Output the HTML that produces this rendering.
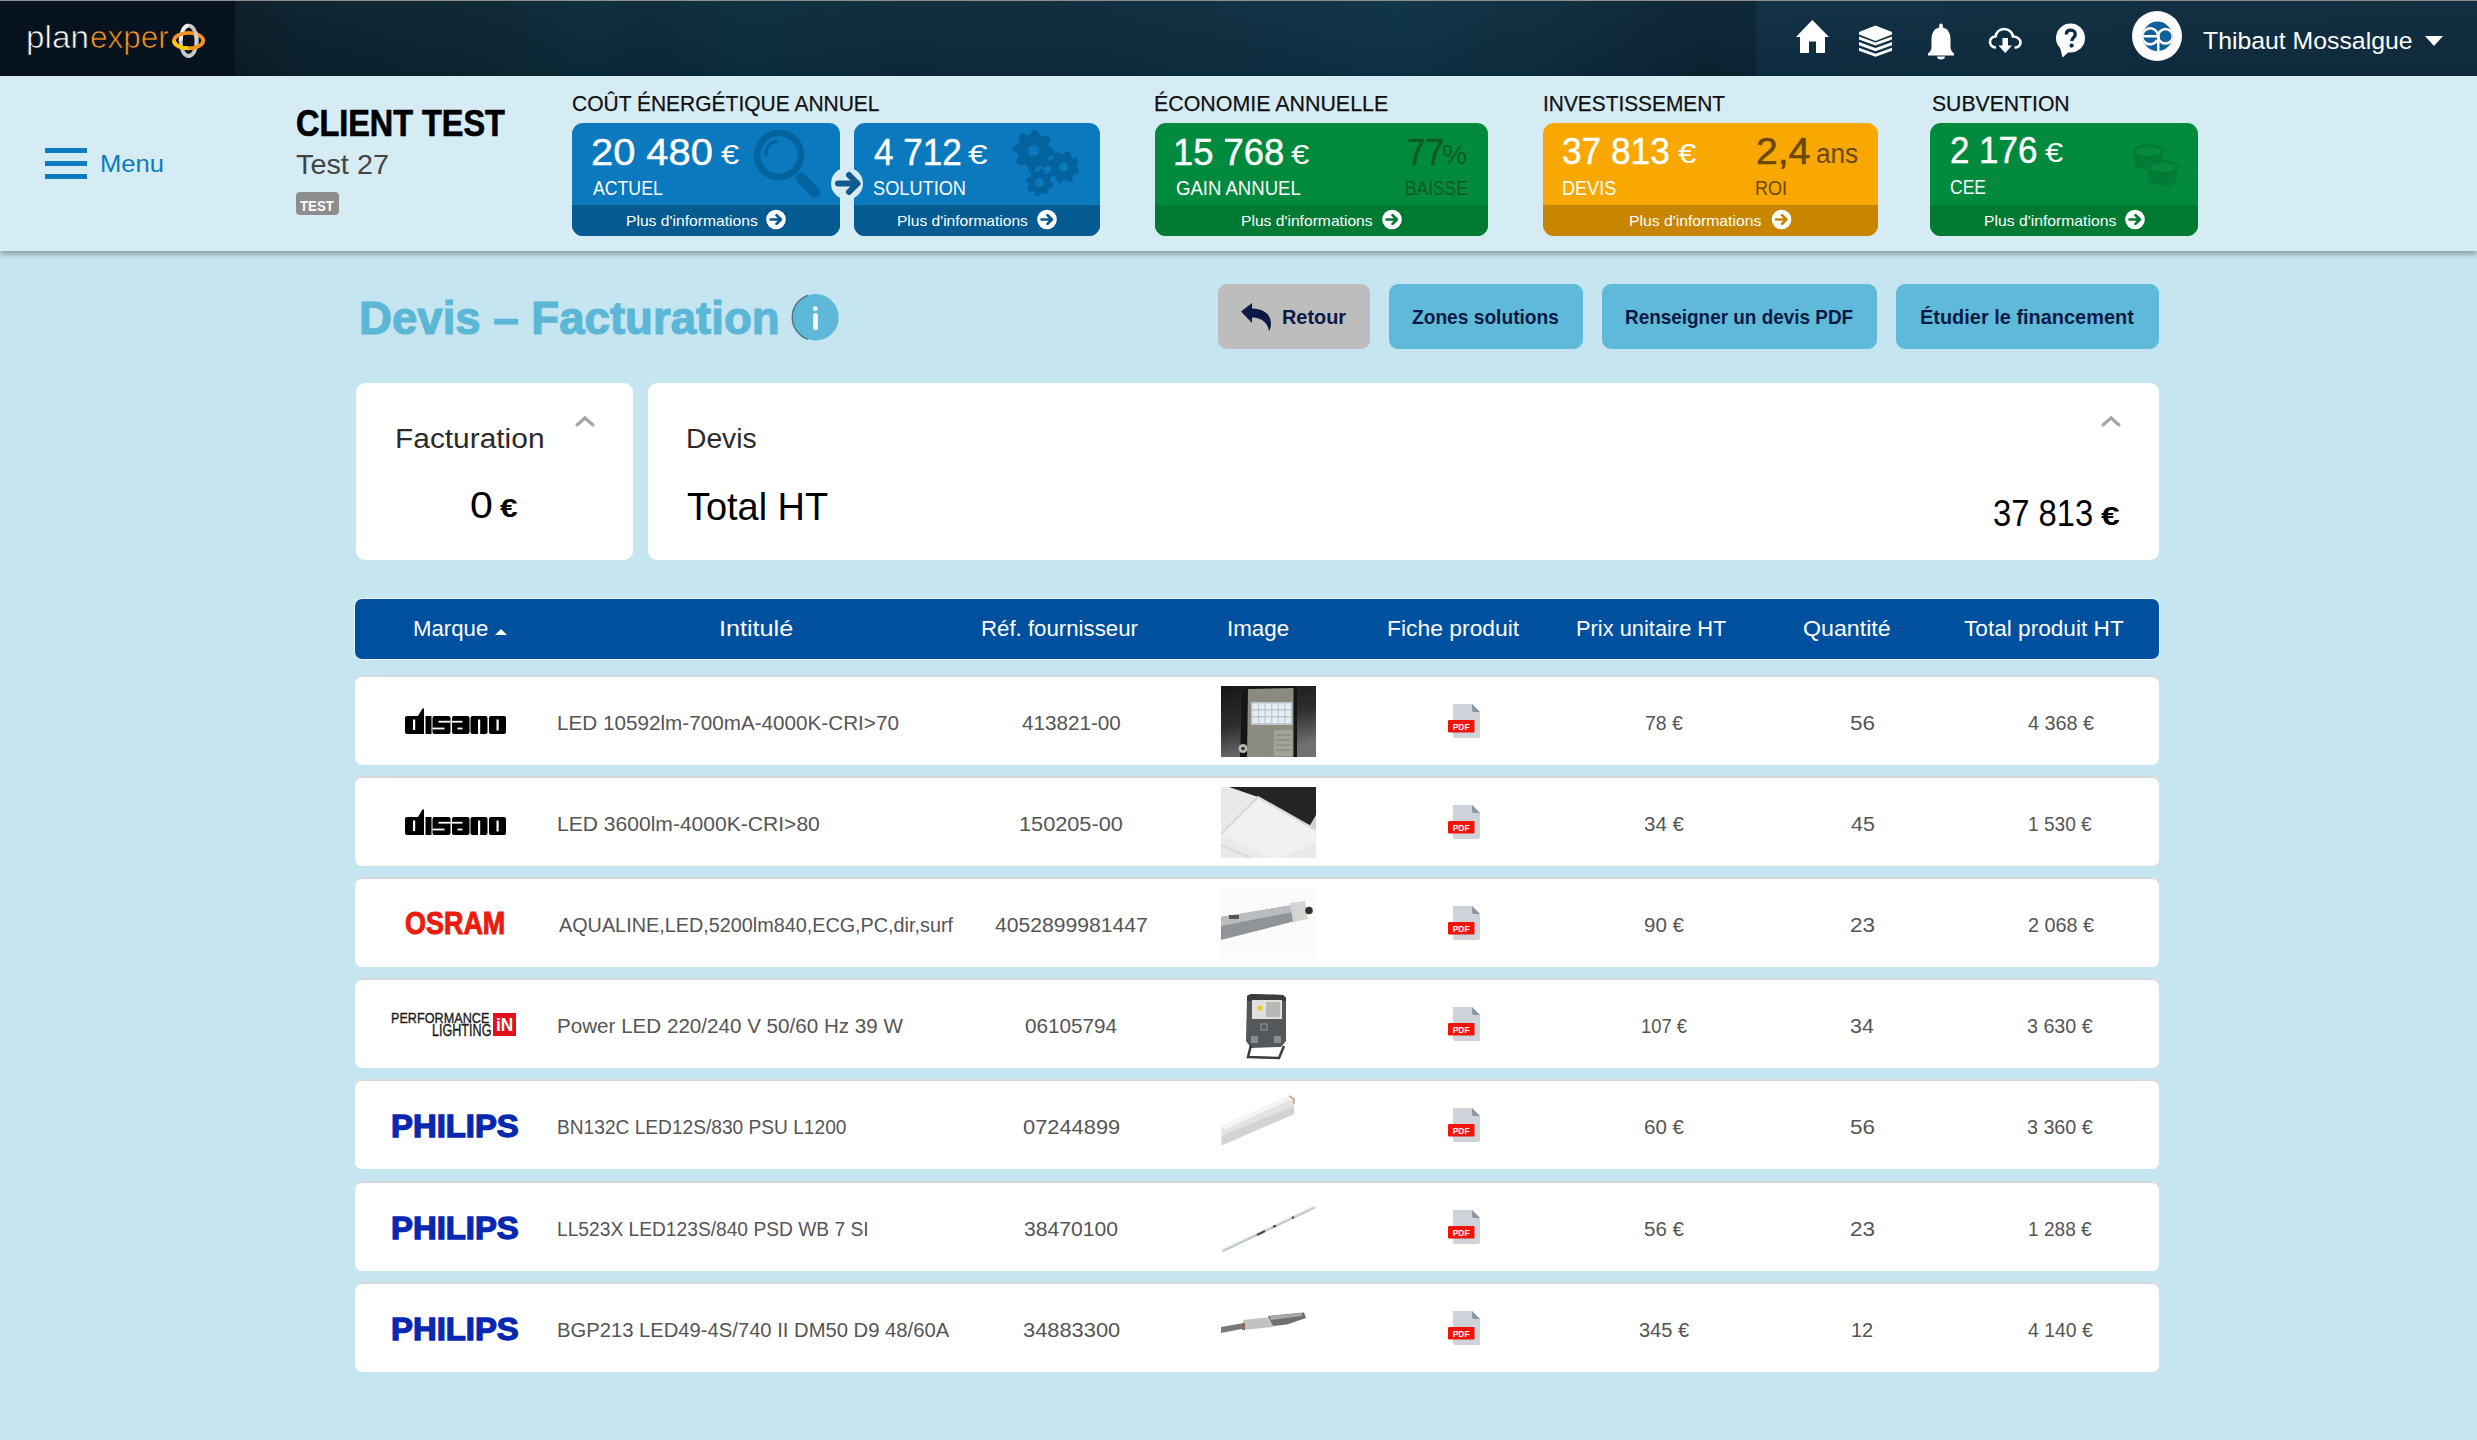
<!DOCTYPE html><html><head><meta charset="utf-8"><style>
*{margin:0;padding:0;box-sizing:border-box}
html,body{width:2477px;height:1440px;overflow:hidden;background:#c5e5f0;font-family:"Liberation Sans",sans-serif}
.t{position:absolute;white-space:nowrap;display:block}
.nav{position:absolute;left:0;top:0;width:2477px;height:76px;border-top:1px solid #8e8e8e;
 background:linear-gradient(180deg,rgba(255,255,255,0.02),rgba(0,0,0,0.04)),linear-gradient(90deg,#0a1c28 9.5%,#0b212e 12.1%,#0c2634 20.2%,#0b2b39 23.8%,#0c2837 26.2%,#0a2e3d 30.1%,#0d2a3b 36.3%,#0d2b3d 44.4%,#0d3246 56.5%,#0d2c3d 62.6%,#0b2333 68.6%,#0b2434 70.8%,#0f2e42 71%,#0e2d40 80.7%,#0e2b3d 100%)}
.navlogo{position:absolute;left:0;top:1px;width:235px;height:75px;background:#06121d}
.band{position:absolute;left:0;top:76px;width:2477px;height:175px;background:#d6ecf5;box-shadow:0 3px 6px rgba(0,0,0,0.32)}
.row{position:absolute;left:355px;width:1804px;height:90px;background:#fff;border-radius:7px;box-shadow:inset 0 2px 0 #d5d9dc}
</style></head><body>
<div class="nav"></div>
<div class="navlogo"></div>
<div class="band"></div>
<div style="position:absolute;left:45px;top:148px;width:42px;height:5px;background:#0b7cc0"></div>
<div style="position:absolute;left:45px;top:161px;width:42px;height:5px;background:#0b7cc0"></div>
<div style="position:absolute;left:45px;top:174px;width:42px;height:5px;background:#0b7cc0"></div>
<div style="position:absolute;left:296px;top:192px;width:43px;height:23px;background:#8d8d8d;border-radius:4px"></div>
<div style="position:absolute;left:572px;top:123px;width:268px;height:113px;background:#0a79be;border-radius:11px;overflow:hidden"><div style="position:absolute;left:0;top:82px;width:100%;height:31px;background:#035b91"></div></div>
<div style="position:absolute;left:854px;top:123px;width:246px;height:113px;background:#0a79be;border-radius:11px;overflow:hidden"><div style="position:absolute;left:0;top:82px;width:100%;height:31px;background:#035b91"></div></div>
<div style="position:absolute;left:1155px;top:123px;width:333px;height:113px;background:#008a3d;border-radius:11px;overflow:hidden"><div style="position:absolute;left:0;top:82px;width:100%;height:31px;background:#007a33"></div></div>
<div style="position:absolute;left:1543px;top:123px;width:335px;height:113px;background:#f8a800;border-radius:11px;overflow:hidden"><div style="position:absolute;left:0;top:82px;width:100%;height:31px;background:#c88600"></div></div>
<div style="position:absolute;left:1930px;top:123px;width:268px;height:113px;background:#008a3d;border-radius:11px;overflow:hidden"><div style="position:absolute;left:0;top:82px;width:100%;height:31px;background:#007a33"></div></div>
<svg style="position:absolute;z-index:3;left:170px;top:22px;overflow:visible" width="40" height="40" viewBox="0 0 40 40"><ellipse cx="18.6" cy="18.8" rx="8" ry="15.2" fill="none" stroke="#c8c8c8" stroke-width="3.8"/><path d="M18.6,3.6 A8,15.2 0 0 0 10.6,18.8" fill="none" stroke="#f2f2f2" stroke-width="3.8"/><ellipse cx="18.6" cy="18.6" rx="14.6" ry="7.8" fill="none" stroke="#f7931e" stroke-width="3.8"/><path d="M4,18.6 A14.6,7.8 0 0 0 18.6,26.4" fill="none" stroke="#ffcc00" stroke-width="3.8"/><path d="M25.5,10 A8,15.2 0 0 1 26.6,22" fill="none" stroke="#d0d0d0" stroke-width="3.8"/></svg>
<svg style="position:absolute;z-index:3;left:1790px;top:15px;overflow:visible" width="45" height="45" viewBox="0 0 45 45"><path d="M22.3,5 L39,22 L35,22 L35,38 L26,38 L26,26.6 L19,26.6 L19,38 L10,38 L10,22 L6,22 Z" fill="#fff"/></svg>
<svg style="position:absolute;z-index:3;left:1859px;top:25px;overflow:visible" width="33" height="32" viewBox="0 0 33 32"><path d="M0,7 L16.5,0.5 L33,7 L33,9.5 L16.5,16 L0,9.5Z" fill="#fff"/><path d="M0,11.5 L16.5,17.5 L33,11.5 L33,14.6 L16.5,20.6 L0,14.6Z" fill="#fff"/><path d="M0,17.1 L16.5,23.1 L33,17.1 L33,20.2 L16.5,26.200000000000003 L0,20.2Z" fill="#fff"/><path d="M0,22.7 L16.5,28.7 L33,22.7 L33,25.799999999999997 L16.5,31.8 L0,25.799999999999997Z" fill="#fff"/></svg>
<svg style="position:absolute;z-index:3;left:1926px;top:22px;overflow:visible" width="30" height="37" viewBox="0 0 30 37"><rect x="13.2" y="1.5" width="3.6" height="6" rx="1.8" fill="#fff"/><path d="M15,5.5 C8,5.5 5.5,11 5.5,18 L5.5,25 C5.5,28 4,30 2,31.5 L2,33.5 L28,33.5 L28,31.5 C26,30 24.5,28 24.5,25 L24.5,18 C24.5,11 22,5.5 15,5.5Z" fill="#fff"/><path d="M11,34.5 A4,3 0 0 0 19,34.5Z" fill="#fff"/></svg>
<svg style="position:absolute;z-index:3;left:1987px;top:26px;overflow:visible" width="37" height="30" viewBox="0 0 37 30"><path d="M9,21.5 C4.5,21.5 3,18.5 3,16 C3,12.5 5.5,10.5 8.5,10.5 C9.5,5.5 13.5,3 17.5,3 C22,3 25.5,6.5 26,10.5 C30,10.5 33.5,13 33.5,16.5 C33.5,19.5 31,21.5 27.5,21.5" fill="none" stroke="#fff" stroke-width="2.6"/><path d="M15.5,12 L21,12 L21,19.5 L25,19.5 L18.2,27 L11.5,19.5 L15.5,19.5Z" fill="#fff"/></svg>
<svg style="position:absolute;z-index:3;left:2054px;top:22px;overflow:visible" width="34" height="38" viewBox="0 0 34 38"><circle cx="16.5" cy="16" r="14.5" fill="#fff"/><path d="M6,25 L8.5,35.5 L17,28Z" fill="#fff"/><path d="M12.3,12.5 C12.3,9.7 14.2,8.2 16.7,8.2 C19.3,8.2 21.2,9.8 21.2,12.2 C21.2,15.6 17.8,15.6 17.8,19" fill="none" stroke="#0d2b40" stroke-width="3.3"/><circle cx="17.6" cy="23.6" r="2.1" fill="#0d2b40"/></svg>
<svg style="position:absolute;z-index:3;left:2132px;top:11px;overflow:visible" width="50" height="50" viewBox="0 0 50 50"><defs><clipPath id="avc"><circle cx="25.5" cy="25.4" r="14.8"/></clipPath></defs><circle cx="25" cy="25" r="25" fill="#fff"/><circle cx="25.5" cy="25.4" r="14.8" fill="#11609a"/><g clip-path="url(#avc)" fill="none" stroke="#fff" stroke-width="2.5"><path d="M9,25.2 H26.4"/><path d="M26.2,25.2 A8,8 0 1 0 25.2,29.2"/><path d="M26.3,25 V42"/><circle cx="33.5" cy="25.2" r="7.3"/></g></svg>
<div style="position:absolute;left:2425px;top:36px;width:0;height:0;border-left:9.5px solid transparent;border-right:9.5px solid transparent;border-top:10px solid #fff"></div>
<svg style="position:absolute;z-index:3;left:750px;top:127px;overflow:visible" width="75" height="75" viewBox="0 0 75 75"><circle cx="29" cy="28" r="22" fill="none" stroke="#03639f" stroke-width="6.5"/><path d="M16,27 C16,20 20,15.5 26,14.5" fill="none" stroke="#03639f" stroke-width="3.5" stroke-linecap="round"/><path d="M51,51 L65,65.5" stroke="#03639f" stroke-width="10.5" stroke-linecap="round"/></svg>
<svg style="position:absolute;z-index:3;left:0px;top:0px;overflow:visible" width="2477" height="300" viewBox="0 0 2477 300"><path d="M1053.5,150.5 L1053.1,154.4 L1047.8,156.4 L1046.4,159.1 L1047.6,164.6 L1044.6,167.1 L1039.4,164.8 L1036.5,165.7 L1033.5,170.5 L1029.6,170.1 L1027.6,164.8 L1024.9,163.4 L1019.4,164.6 L1016.9,161.6 L1019.2,156.4 L1018.3,153.5 L1013.5,150.5 L1013.9,146.6 L1019.2,144.6 L1020.6,141.9 L1019.4,136.4 L1022.4,133.9 L1027.6,136.2 L1030.5,135.3 L1033.5,130.5 L1037.4,130.9 L1039.4,136.2 L1042.1,137.6 L1047.6,136.4 L1050.1,139.4 L1047.8,144.6 L1048.7,147.5Z" fill="#03639f" stroke="#03639f" stroke-width="1.5" stroke-linejoin="round"/><circle cx="1033.5" cy="150.5" r="5.5" fill="#0a79be"/><path d="M1078.7,170.1 L1077.8,173.0 L1073.5,173.7 L1072.0,175.5 L1072.1,179.9 L1069.4,181.3 L1065.8,178.8 L1063.5,179.0 L1060.4,182.2 L1057.5,181.3 L1056.8,177.0 L1055.0,175.5 L1050.6,175.6 L1049.2,172.9 L1051.7,169.3 L1051.5,167.0 L1048.3,163.9 L1049.2,161.0 L1053.5,160.3 L1055.0,158.5 L1054.9,154.1 L1057.6,152.7 L1061.2,155.2 L1063.5,155.0 L1066.6,151.8 L1069.5,152.7 L1070.2,157.0 L1072.0,158.5 L1076.4,158.4 L1077.8,161.1 L1075.3,164.7 L1075.5,167.0Z" fill="#03639f" stroke="#03639f" stroke-width="1.5" stroke-linejoin="round"/><circle cx="1063.5" cy="167" r="4.5" fill="#0a79be"/><path d="M1052.4,183.8 L1051.9,186.3 L1048.3,187.2 L1047.2,188.9 L1047.7,192.6 L1045.6,194.0 L1042.4,192.1 L1040.5,192.5 L1038.2,195.4 L1035.7,194.9 L1034.8,191.3 L1033.1,190.2 L1029.4,190.7 L1028.0,188.6 L1029.9,185.4 L1029.5,183.5 L1026.6,181.2 L1027.1,178.7 L1030.7,177.8 L1031.8,176.1 L1031.3,172.4 L1033.4,171.0 L1036.6,172.9 L1038.5,172.5 L1040.8,169.6 L1043.3,170.1 L1044.2,173.7 L1045.9,174.8 L1049.6,174.3 L1051.0,176.4 L1049.1,179.6 L1049.5,181.5Z" fill="#03639f" stroke="#03639f" stroke-width="1.5" stroke-linejoin="round"/><circle cx="1039.5" cy="182.5" r="4.5" fill="#0a79be"/></svg>
<svg style="position:absolute;z-index:3;left:828px;top:166px;overflow:visible" width="38" height="36" viewBox="0 0 38 36"><circle cx="19" cy="17.5" r="16" fill="#d6ecf5"/><path d="M10,17.5 H28 M21,9 L29.5,17.5 L21,26" fill="none" stroke="#0f5a8e" stroke-width="6" stroke-linecap="round" stroke-linejoin="round"/></svg>
<svg style="position:absolute;z-index:3;left:0px;top:0px;overflow:visible" width="2477" height="300" viewBox="0 0 2477 300"><path d="M2134.5,151.5 V163.5 A14,6 0 0 0 2162.5,163.5 V151.5 A14,6 0 0 0 2134.5,151.5Z" fill="#037a37" stroke="#04823a" stroke-width="0.8"/><ellipse cx="2148.5" cy="151.5" rx="14" ry="6" fill="#058a3e" stroke="#037a37" stroke-width="2.5"/><path d="M2148.5,167.5 V179.5 A14,6 0 0 0 2176.5,179.5 V167.5 A14,6 0 0 0 2148.5,167.5Z" fill="#037a37" stroke="#04823a" stroke-width="0.8"/><ellipse cx="2162.5" cy="167.5" rx="14" ry="6" fill="#058a3e" stroke="#037a37" stroke-width="2.5"/></svg>
<svg style="position:absolute;z-index:3;left:0px;top:0px;overflow:visible" width="2477" height="300" viewBox="0 0 2477 300"><circle cx="776" cy="219.5" r="9.8" fill="#fff"/><path d="M770.6,219.5 H779.9 M776.5,215.1 L780.9,219.5 L776.5,223.9" stroke="#035b91" stroke-width="2.7" fill="none" stroke-linecap="round" stroke-linejoin="round"/></svg>
<svg style="position:absolute;z-index:3;left:0px;top:0px;overflow:visible" width="2477" height="300" viewBox="0 0 2477 300"><circle cx="1047" cy="219.5" r="9.8" fill="#fff"/><path d="M1041.6,219.5 H1050.9 M1047.5,215.1 L1051.9,219.5 L1047.5,223.9" stroke="#035b91" stroke-width="2.7" fill="none" stroke-linecap="round" stroke-linejoin="round"/></svg>
<svg style="position:absolute;z-index:3;left:0px;top:0px;overflow:visible" width="2477" height="300" viewBox="0 0 2477 300"><circle cx="1392" cy="219.5" r="9.8" fill="#fff"/><path d="M1386.6,219.5 H1395.9 M1392.5,215.1 L1396.9,219.5 L1392.5,223.9" stroke="#007a33" stroke-width="2.7" fill="none" stroke-linecap="round" stroke-linejoin="round"/></svg>
<svg style="position:absolute;z-index:3;left:0px;top:0px;overflow:visible" width="2477" height="300" viewBox="0 0 2477 300"><circle cx="1781.5" cy="219.5" r="9.8" fill="#fff"/><path d="M1776.1,219.5 H1785.4 M1782.0,215.1 L1786.4,219.5 L1782.0,223.9" stroke="#c88600" stroke-width="2.7" fill="none" stroke-linecap="round" stroke-linejoin="round"/></svg>
<svg style="position:absolute;z-index:3;left:0px;top:0px;overflow:visible" width="2477" height="300" viewBox="0 0 2477 300"><circle cx="2135" cy="219.5" r="9.8" fill="#fff"/><path d="M2129.6,219.5 H2138.9 M2135.5,215.1 L2139.9,219.5 L2135.5,223.9" stroke="#007a33" stroke-width="2.7" fill="none" stroke-linecap="round" stroke-linejoin="round"/></svg>
<svg style="position:absolute;z-index:3;left:790px;top:292px;overflow:visible" width="50" height="50" viewBox="0 0 50 50"><circle cx="25.5" cy="25.3" r="23.2" fill="#5eb9d8"/><path d="M18,3.3 A23.2,23.2 0 0 0 18,47.3" fill="none" stroke="#50707c" stroke-width="1.3"/><rect x="23.2" y="21" width="4.6" height="17.2" rx="2.2" fill="#fff"/><circle cx="25.4" cy="16.6" r="2.3" fill="#fff"/></svg>
<svg style="position:absolute;z-index:3;left:1238px;top:300px;overflow:visible" width="40" height="36" viewBox="0 0 40 36"><path d="M3,11.5 L14,3 L14,8.5 C24,8.5 33,13 33,24 C33,27 32,29.5 31,31 C30,24 25,17.5 14,17.5 L14,23Z" fill="#0b1a45"/></svg>
<svg style="position:absolute;z-index:3;left:575px;top:413px;overflow:visible" width="20" height="16" viewBox="0 0 20 16"><path d="M2,12 L10,5 L18,12" fill="none" stroke="#a6a6a6" stroke-width="3.2" stroke-linecap="round"/></svg>
<svg style="position:absolute;z-index:3;left:2101px;top:413px;overflow:visible" width="20" height="16" viewBox="0 0 20 16"><path d="M2,12 L10,5 L18,12" fill="none" stroke="#a6a6a6" stroke-width="3.2" stroke-linecap="round"/></svg>
<div style="position:absolute;left:1217.6px;top:284px;width:152.20000000000005px;height:65px;background:#bdbdbd;border-radius:9px"></div>
<div style="position:absolute;left:1389px;top:284px;width:194px;height:65px;background:#5fbad9;border-radius:9px"></div>
<div style="position:absolute;left:1602px;top:284px;width:275px;height:65px;background:#5fbad9;border-radius:9px"></div>
<div style="position:absolute;left:1896px;top:284px;width:263px;height:65px;background:#5fbad9;border-radius:9px"></div>
<div style="position:absolute;left:356px;top:383px;width:277px;height:177px;background:#fff;border-radius:9px"></div>
<div style="position:absolute;left:648px;top:383px;width:1511px;height:177px;background:#fff;border-radius:9px"></div>
<div style="position:absolute;left:355px;top:599px;width:1804px;height:60px;background:#0050a0;border-radius:7px;box-shadow:0 0 0 1px rgba(255,255,255,0.55)"></div>
<div style="position:absolute;left:495px;top:629px;width:0;height:0;border-left:6px solid transparent;border-right:6px solid transparent;border-bottom:6px solid #fff"></div>
<div class="row" style="top:675px"></div>
<svg style="position:absolute;z-index:3;left:405px;top:708px;overflow:visible" width="101" height="26" viewBox="0 0 101 26"><path d="M0,10 Q0,8 2,8 L13,8 L17.5,0.5 L19,0.5 L19,26 L2,26 Q0,26 0,24Z" fill="#000"/><rect x="8" y="11.5" width="2.2" height="10.5" fill="#fff"/><rect x="20.5" y="8" width="6" height="18" fill="#000"/><rect x="27.5" y="8" width="18" height="18" rx="2" fill="#000"/><rect x="33.5" y="12.8" width="12" height="1.8" fill="#fff"/><rect x="27.5" y="19.6" width="12" height="1.8" fill="#fff"/><rect x="47" y="8" width="17.5" height="18" rx="2" fill="#000"/><rect x="47" y="12.8" width="10.5" height="1.8" fill="#fff"/><rect x="52.5" y="19.6" width="5" height="1.8" fill="#fff"/><rect x="65.5" y="8" width="17" height="18" rx="2" fill="#000"/><rect x="73" y="11.5" width="2.2" height="14.5" fill="#fff"/><rect x="84" y="8" width="17" height="18" rx="2" fill="#000"/><rect x="91.5" y="11.5" width="2.2" height="11" fill="#fff"/></svg>
<svg style="position:absolute;z-index:3;left:1221px;top:686px;overflow:visible" width="95" height="71" viewBox="0 0 95 71"><defs><linearGradient id="g0" x1="0" y1="0" x2="0.3" y2="1"><stop offset="0" stop-color="#161616"/><stop offset="0.55" stop-color="#2e2e2e"/><stop offset="1" stop-color="#707070"/></linearGradient></defs><rect width="95" height="71" fill="url(#g0)"/><path d="M21,8 L28,1 L76,0 L76,71 L19,71Z" fill="#151515"/><path d="M27,3 L72.5,2 L72.5,71 L26,71Z" fill="#8b8c7f"/><rect x="30" y="16" width="41.5" height="23" fill="#b9c6d0"/><rect x="31.5" y="17.5" width="5.4" height="5.6" fill="#e6eef4"/><rect x="38.1" y="17.5" width="5.4" height="5.6" fill="#e6eef4"/><rect x="44.7" y="17.5" width="5.4" height="5.6" fill="#e6eef4"/><rect x="51.3" y="17.5" width="5.4" height="5.6" fill="#e6eef4"/><rect x="57.9" y="17.5" width="5.4" height="5.6" fill="#e6eef4"/><rect x="64.5" y="17.5" width="5.4" height="5.6" fill="#e6eef4"/><rect x="31.5" y="24.5" width="5.4" height="5.6" fill="#e6eef4"/><rect x="38.1" y="24.5" width="5.4" height="5.6" fill="#e6eef4"/><rect x="44.7" y="24.5" width="5.4" height="5.6" fill="#e6eef4"/><rect x="51.3" y="24.5" width="5.4" height="5.6" fill="#e6eef4"/><rect x="57.9" y="24.5" width="5.4" height="5.6" fill="#e6eef4"/><rect x="64.5" y="24.5" width="5.4" height="5.6" fill="#e6eef4"/><rect x="31.5" y="31.5" width="5.4" height="5.6" fill="#e6eef4"/><rect x="38.1" y="31.5" width="5.4" height="5.6" fill="#e6eef4"/><rect x="44.7" y="31.5" width="5.4" height="5.6" fill="#e6eef4"/><rect x="51.3" y="31.5" width="5.4" height="5.6" fill="#e6eef4"/><rect x="57.9" y="31.5" width="5.4" height="5.6" fill="#e6eef4"/><rect x="64.5" y="31.5" width="5.4" height="5.6" fill="#e6eef4"/><rect x="53" y="44" width="18.5" height="26" fill="#a3a498"/><path d="M55,49 H70 M55,54 H70 M55,59 H70 M55,64 H70" stroke="#7a7b70" stroke-width="0.8"/><circle cx="22" cy="62.5" r="4.5" fill="#b8b8ae"/><circle cx="22" cy="62.5" r="1.8" fill="#333"/></svg>
<svg style="position:absolute;z-index:3;left:1446px;top:704px;overflow:visible" width="36" height="36" viewBox="0 0 36 36"><path d="M7,0 H26 L34,8 V32 A2,2 0 0 1 32,34 H9 A2,2 0 0 1 7,32Z" fill="#cdd3d8"/><path d="M26,0 L34,8 H28 A2,2 0 0 1 26,6Z" fill="#8a97a3"/><rect x="2" y="16" width="26.5" height="12.5" rx="1.2" fill="#f0140a"/><text x="15.2" y="26" font-size="8.5" font-weight="bold" font-family="Liberation Sans" fill="#fff" text-anchor="middle">PDF</text></svg>
<div class="row" style="top:776px"></div>
<svg style="position:absolute;z-index:3;left:405px;top:809px;overflow:visible" width="101" height="26" viewBox="0 0 101 26"><path d="M0,10 Q0,8 2,8 L13,8 L17.5,0.5 L19,0.5 L19,26 L2,26 Q0,26 0,24Z" fill="#000"/><rect x="8" y="11.5" width="2.2" height="10.5" fill="#fff"/><rect x="20.5" y="8" width="6" height="18" fill="#000"/><rect x="27.5" y="8" width="18" height="18" rx="2" fill="#000"/><rect x="33.5" y="12.8" width="12" height="1.8" fill="#fff"/><rect x="27.5" y="19.6" width="12" height="1.8" fill="#fff"/><rect x="47" y="8" width="17.5" height="18" rx="2" fill="#000"/><rect x="47" y="12.8" width="10.5" height="1.8" fill="#fff"/><rect x="52.5" y="19.6" width="5" height="1.8" fill="#fff"/><rect x="65.5" y="8" width="17" height="18" rx="2" fill="#000"/><rect x="73" y="11.5" width="2.2" height="14.5" fill="#fff"/><rect x="84" y="8" width="17" height="18" rx="2" fill="#000"/><rect x="91.5" y="11.5" width="2.2" height="11" fill="#fff"/></svg>
<svg style="position:absolute;z-index:3;left:1221px;top:787px;overflow:visible" width="95" height="71" viewBox="0 0 95 71"><rect width="95" height="71" fill="#e8eae7"/><path d="M8,0 H95 V42 L37,10 Z" fill="#242424"/><path d="M95,28 V44 L88,40Z" fill="#d0d2cf"/><path d="M0,46 L37,10 L95,42 L95,56 L60,71 L48,71 L0,48Z" fill="#f1f2f0"/><path d="M0,47 L37,10 L95,43" fill="none" stroke="#d6d8d4" stroke-width="2.2"/><path d="M0,58 L30,71" stroke="#d6d8d4" stroke-width="1.5"/></svg>
<svg style="position:absolute;z-index:3;left:1446px;top:805px;overflow:visible" width="36" height="36" viewBox="0 0 36 36"><path d="M7,0 H26 L34,8 V32 A2,2 0 0 1 32,34 H9 A2,2 0 0 1 7,32Z" fill="#cdd3d8"/><path d="M26,0 L34,8 H28 A2,2 0 0 1 26,6Z" fill="#8a97a3"/><rect x="2" y="16" width="26.5" height="12.5" rx="1.2" fill="#f0140a"/><text x="15.2" y="26" font-size="8.5" font-weight="bold" font-family="Liberation Sans" fill="#fff" text-anchor="middle">PDF</text></svg>
<div class="row" style="top:877px"></div>

<svg style="position:absolute;z-index:3;left:1221px;top:888px;overflow:visible" width="95" height="71" viewBox="0 0 95 71"><rect width="95" height="71" fill="#fbfbfb"/><path d="M0,29 L72,17 L74,33 L0,52Z" fill="#8f9499"/><path d="M0,29 L72,17 L72,24 L0,38Z" fill="#b9bdc0"/><path d="M69,15 L84,13 L87,31 L72,34Z" fill="#d3d6d0"/><circle cx="88" cy="22.5" r="3.8" fill="#333"/><rect x="8" y="27" width="10" height="4" fill="#555"/></svg>
<svg style="position:absolute;z-index:3;left:1446px;top:906px;overflow:visible" width="36" height="36" viewBox="0 0 36 36"><path d="M7,0 H26 L34,8 V32 A2,2 0 0 1 32,34 H9 A2,2 0 0 1 7,32Z" fill="#cdd3d8"/><path d="M26,0 L34,8 H28 A2,2 0 0 1 26,6Z" fill="#8a97a3"/><rect x="2" y="16" width="26.5" height="12.5" rx="1.2" fill="#f0140a"/><text x="15.2" y="26" font-size="8.5" font-weight="bold" font-family="Liberation Sans" fill="#fff" text-anchor="middle">PDF</text></svg>
<div class="row" style="top:978px"></div>
<div style="position:absolute;left:493px;top:1013px;width:23px;height:23.4px;background:#e3101c"></div>
<svg style="position:absolute;z-index:3;left:1221px;top:989px;overflow:visible" width="95" height="71" viewBox="0 0 95 71"><path d="M26,7 L30,5 L62,6 L65,9 L65,52 L60,58 L30,59 L25,52Z" fill="#55585b"/><path d="M26,7 L30,5 L62,6 L65,9 L65,12 L26,12Z" fill="#3a3c3e"/><rect x="31" y="11" width="30" height="19" fill="#e0e0de"/><rect x="45" y="13" width="14" height="15" fill="#b8b8b6"/><circle cx="39" cy="19" r="2.6" fill="#e8d020"/><rect x="40" y="35" width="6" height="6" fill="none" stroke="#9a9c9e" stroke-width="1"/><rect x="30" y="47" width="7" height="7" fill="#8a8c8e"/><rect x="53" y="47" width="7" height="7" fill="#8a8c8e"/><path d="M30,56 L27,68 L58,69 L63,57" fill="none" stroke="#3a3c3e" stroke-width="2.5"/></svg>
<svg style="position:absolute;z-index:3;left:1446px;top:1007px;overflow:visible" width="36" height="36" viewBox="0 0 36 36"><path d="M7,0 H26 L34,8 V32 A2,2 0 0 1 32,34 H9 A2,2 0 0 1 7,32Z" fill="#cdd3d8"/><path d="M26,0 L34,8 H28 A2,2 0 0 1 26,6Z" fill="#8a97a3"/><rect x="2" y="16" width="26.5" height="12.5" rx="1.2" fill="#f0140a"/><text x="15.2" y="26" font-size="8.5" font-weight="bold" font-family="Liberation Sans" fill="#fff" text-anchor="middle">PDF</text></svg>
<div class="row" style="top:1079px"></div>

<svg style="position:absolute;z-index:3;left:1221px;top:1090px;overflow:visible" width="95" height="71" viewBox="0 0 95 71"><path d="M0.5,36 L69,5.5 L73,8 L73,24 L0.5,55.5Z" fill="#e2e4e2"/><path d="M0.5,36 L69,5.5 L73,8 L3,40Z" fill="#f4f5f3"/><path d="M0.5,46 L73,16 L73,24 L0.5,55.5Z" fill="#d2d4d2"/><path d="M68,6 L73,9 L73,14" fill="none" stroke="#c9a68a" stroke-width="1.6"/></svg>
<svg style="position:absolute;z-index:3;left:1446px;top:1108px;overflow:visible" width="36" height="36" viewBox="0 0 36 36"><path d="M7,0 H26 L34,8 V32 A2,2 0 0 1 32,34 H9 A2,2 0 0 1 7,32Z" fill="#cdd3d8"/><path d="M26,0 L34,8 H28 A2,2 0 0 1 26,6Z" fill="#8a97a3"/><rect x="2" y="16" width="26.5" height="12.5" rx="1.2" fill="#f0140a"/><text x="15.2" y="26" font-size="8.5" font-weight="bold" font-family="Liberation Sans" fill="#fff" text-anchor="middle">PDF</text></svg>
<div class="row" style="top:1181px"></div>

<svg style="position:absolute;z-index:3;left:1221px;top:1192px;overflow:visible" width="95" height="71" viewBox="0 0 95 71"><path d="M1.5,58.8 L94,15" stroke="#d5ded5" stroke-width="3"/><path d="M1.5,59.5 L94,15.7" stroke="#aab6aa" stroke-width="0.8"/><path d="M36,43 L44,39 M52,35 L55,33.6 M71,26 L73,25" stroke="#4a4a4a" stroke-width="2"/></svg>
<svg style="position:absolute;z-index:3;left:1446px;top:1210px;overflow:visible" width="36" height="36" viewBox="0 0 36 36"><path d="M7,0 H26 L34,8 V32 A2,2 0 0 1 32,34 H9 A2,2 0 0 1 7,32Z" fill="#cdd3d8"/><path d="M26,0 L34,8 H28 A2,2 0 0 1 26,6Z" fill="#8a97a3"/><rect x="2" y="16" width="26.5" height="12.5" rx="1.2" fill="#f0140a"/><text x="15.2" y="26" font-size="8.5" font-weight="bold" font-family="Liberation Sans" fill="#fff" text-anchor="middle">PDF</text></svg>
<div class="row" style="top:1282px"></div>

<svg style="position:absolute;z-index:3;left:1221px;top:1293px;overflow:visible" width="95" height="71" viewBox="0 0 95 71"><path d="M0,34 L23,30 L23,35.5 L0,40Z" fill="#77797b"/><path d="M22,27 L50,24 L52,34 L23,37Z" fill="#c0c3c2"/><path d="M47,23 L83,19.5 L85,25 L66,31.5 L52,33Z" fill="#6e7072"/><path d="M49,23 L81,20 L81,23 L50,27Z" fill="#a8aaa8"/><rect x="21" y="30" width="3" height="7" fill="#8a6a55"/></svg>
<svg style="position:absolute;z-index:3;left:1446px;top:1311px;overflow:visible" width="36" height="36" viewBox="0 0 36 36"><path d="M7,0 H26 L34,8 V32 A2,2 0 0 1 32,34 H9 A2,2 0 0 1 7,32Z" fill="#cdd3d8"/><path d="M26,0 L34,8 H28 A2,2 0 0 1 26,6Z" fill="#8a97a3"/><rect x="2" y="16" width="26.5" height="12.5" rx="1.2" fill="#f0140a"/><text x="15.2" y="26" font-size="8.5" font-weight="bold" font-family="Liberation Sans" fill="#fff" text-anchor="middle">PDF</text></svg>
<span class="t" style="left:99.5px;top:152.18px;font-size:24.5px;line-height:24.5px;color:#0b7cc0;font-weight:normal;transform:scaleX(1.0431);transform-origin:0 0;">Menu</span>
<span class="t" style="left:296.1px;top:105.70px;font-size:36px;line-height:36px;color:#000;font-weight:bold;transform:scaleX(0.9004);transform-origin:0 0;-webkit-text-stroke:0.7px #000">CLIENT TEST</span>
<span class="t" style="left:296.0px;top:151.20px;font-size:28px;line-height:28px;color:#444;font-weight:normal;transform:scaleX(1.0295);transform-origin:0 0;">Test 27</span>
<span class="t" style="left:300.0px;top:199.10px;font-size:14px;line-height:14px;color:#fff;font-weight:bold;transform:scaleX(0.9444);transform-origin:0 0;">TEST</span>
<span class="t" style="left:571.8px;top:93.08px;font-size:22.5px;line-height:22.5px;color:#111;font-weight:normal;transform:scaleX(0.9329);transform-origin:0 0;-webkit-text-stroke:0.25px #111">COÛT ÉNERGÉTIQUE ANNUEL</span>
<span class="t" style="left:1154.1px;top:93.08px;font-size:22.5px;line-height:22.5px;color:#111;font-weight:normal;transform:scaleX(0.9508);transform-origin:0 0;-webkit-text-stroke:0.25px #111">ÉCONOMIE ANNUELLE</span>
<span class="t" style="left:1542.7px;top:93.08px;font-size:22.5px;line-height:22.5px;color:#111;font-weight:normal;transform:scaleX(0.9278);transform-origin:0 0;-webkit-text-stroke:0.25px #111">INVESTISSEMENT</span>
<span class="t" style="left:1931.8px;top:93.08px;font-size:22.5px;line-height:22.5px;color:#111;font-weight:normal;transform:scaleX(0.9410);transform-origin:0 0;-webkit-text-stroke:0.25px #111">SUBVENTION</span>
<span class="t" style="left:590.9px;top:133.55px;font-size:37px;line-height:37px;color:#fff;font-weight:normal;transform:scaleX(1.0764);transform-origin:0 0;-webkit-text-stroke:0.45px #fff">20 480</span>
<span class="t" style="left:721.0px;top:142.05px;font-size:27px;line-height:27px;color:#fff;font-weight:normal;transform:scaleX(1.2133);transform-origin:0 0;">€</span>
<span class="t" style="left:593.0px;top:177.57px;font-size:20.5px;line-height:20.5px;color:#fff;font-weight:normal;transform:scaleX(0.8625);transform-origin:0 0;">ACTUEL</span>
<span class="t" style="left:873.6px;top:133.55px;font-size:37px;line-height:37px;color:#fff;font-weight:normal;transform:scaleX(0.9494);transform-origin:0 0;-webkit-text-stroke:0.45px #fff">4 712</span>
<span class="t" style="left:967.7px;top:142.05px;font-size:27px;line-height:27px;color:#fff;font-weight:normal;transform:scaleX(1.3071);transform-origin:0 0;">€</span>
<span class="t" style="left:873.1px;top:177.57px;font-size:20.5px;line-height:20.5px;color:#fff;font-weight:normal;transform:scaleX(0.8873);transform-origin:0 0;">SOLUTION</span>
<span class="t" style="left:1172.7px;top:133.55px;font-size:37px;line-height:37px;color:#fff;font-weight:normal;transform:scaleX(0.9824);transform-origin:0 0;-webkit-text-stroke:0.45px #fff">15 768</span>
<span class="t" style="left:1291.0px;top:142.05px;font-size:27px;line-height:27px;color:#fff;font-weight:normal;transform:scaleX(1.2200);transform-origin:0 0;">€</span>
<span class="t" style="left:1175.6px;top:177.57px;font-size:20.5px;line-height:20.5px;color:#fff;font-weight:normal;transform:scaleX(0.9051);transform-origin:0 0;">GAIN ANNUEL</span>
<span class="t" style="left:1406.5px;top:133.55px;font-size:37px;line-height:37px;color:#0f5a1e;font-weight:normal;transform:scaleX(0.9000);transform-origin:0 0;-webkit-text-stroke:0.6px #0f5a1e">77</span>
<span class="t" style="left:1442.0px;top:142.05px;font-size:27px;line-height:27px;color:#0f5a1e;font-weight:normal;transform:scaleX(1.0455);transform-origin:0 0;">%</span>
<span class="t" style="left:1405.3px;top:177.57px;font-size:20.5px;line-height:20.5px;color:#0f5a1e;font-weight:normal;transform:scaleX(0.8472);transform-origin:0 0;">BAISSE</span>
<span class="t" style="left:1562.1px;top:132.55px;font-size:37px;line-height:37px;color:#fff;font-weight:normal;transform:scaleX(0.9527);transform-origin:0 0;-webkit-text-stroke:0.45px #fff">37 813</span>
<span class="t" style="left:1678.0px;top:141.05px;font-size:27px;line-height:27px;color:#fff;font-weight:normal;transform:scaleX(1.2267);transform-origin:0 0;">€</span>
<span class="t" style="left:1562.2px;top:177.57px;font-size:20.5px;line-height:20.5px;color:#fff;font-weight:normal;transform:scaleX(0.8814);transform-origin:0 0;">DEVIS</span>
<span class="t" style="left:1755.7px;top:132.55px;font-size:37px;line-height:37px;color:#6b4800;font-weight:normal;transform:scaleX(1.0531);transform-origin:0 0;-webkit-text-stroke:0.6px #6b4800">2,4</span>
<span class="t" style="left:1816.0px;top:141.05px;font-size:27px;line-height:27px;color:#6b4800;font-weight:normal;transform:scaleX(0.9690);transform-origin:0 0;">ans</span>
<span class="t" style="left:1755.3px;top:177.57px;font-size:20.5px;line-height:20.5px;color:#6b4800;font-weight:normal;transform:scaleX(0.8788);transform-origin:0 0;">ROI</span>
<span class="t" style="left:1949.8px;top:131.55px;font-size:37px;line-height:37px;color:#fff;font-weight:normal;transform:scaleX(0.9438);transform-origin:0 0;-webkit-text-stroke:0.45px #fff">2 176</span>
<span class="t" style="left:2045.3px;top:140.05px;font-size:27px;line-height:27px;color:#fff;font-weight:normal;transform:scaleX(1.2133);transform-origin:0 0;">€</span>
<span class="t" style="left:1950.2px;top:176.57px;font-size:20.5px;line-height:20.5px;color:#fff;font-weight:normal;transform:scaleX(0.8537);transform-origin:0 0;">CEE</span>
<span class="t" style="left:625.6px;top:212.85px;font-size:15px;line-height:15px;color:#fff;font-weight:normal;transform:scaleX(1.0435);transform-origin:0 0;">Plus d'informations</span>
<span class="t" style="left:896.5px;top:212.85px;font-size:15px;line-height:15px;color:#fff;font-weight:normal;transform:scaleX(1.0363);transform-origin:0 0;">Plus d'informations</span>
<span class="t" style="left:1240.7px;top:212.85px;font-size:15px;line-height:15px;color:#fff;font-weight:normal;transform:scaleX(1.0424);transform-origin:0 0;">Plus d'informations</span>
<span class="t" style="left:1629.0px;top:212.85px;font-size:15px;line-height:15px;color:#fff;font-weight:normal;transform:scaleX(1.0480);transform-origin:0 0;">Plus d'informations</span>
<span class="t" style="left:1984.0px;top:212.85px;font-size:15px;line-height:15px;color:#fff;font-weight:normal;transform:scaleX(1.0480);transform-origin:0 0;">Plus d'informations</span>
<span class="t" style="left:25.8px;top:22.82px;font-size:30.8px;line-height:30.8px;color:#fff;font-weight:normal;transform:scaleX(1.0804);transform-origin:0 0;-webkit-text-stroke:0.7px #06121d">plan</span>
<span class="t" style="left:89.6px;top:22.82px;font-size:30.8px;line-height:30.8px;color:#f7931e;font-weight:normal;transform:scaleX(1.0221);transform-origin:0 0;-webkit-text-stroke:0.7px #06121d">exper</span>
<span class="t" style="left:2203.0px;top:28.68px;font-size:24.5px;line-height:24.5px;color:#fff;font-weight:normal;transform:scaleX(1.0121);transform-origin:0 0;">Thibaut Mossalgue</span>
<span class="t" style="left:358.7px;top:295.40px;font-size:46px;line-height:46px;color:#5cb7d7;font-weight:bold;transform:scaleX(0.9911);transform-origin:0 0;-webkit-text-stroke:1.2px #5cb7d7">Devis – Facturation</span>
<span class="t" style="left:1282.0px;top:307.18px;font-size:20.5px;line-height:20.5px;color:#0b1a45;font-weight:bold;transform:scaleX(0.9692);transform-origin:0 0;">Retour</span>
<span class="t" style="left:1412.1px;top:307.18px;font-size:20.5px;line-height:20.5px;color:#0b1a45;font-weight:bold;transform:scaleX(0.9346);transform-origin:0 0;">Zones solutions</span>
<span class="t" style="left:1625.1px;top:307.18px;font-size:20.5px;line-height:20.5px;color:#0b1a45;font-weight:bold;transform:scaleX(0.9228);transform-origin:0 0;">Renseigner un devis PDF</span>
<span class="t" style="left:1920.0px;top:307.18px;font-size:20.5px;line-height:20.5px;color:#0b1a45;font-weight:bold;transform:scaleX(0.9726);transform-origin:0 0;">Étudier le financement</span>
<span class="t" style="left:394.8px;top:425.85px;font-size:27px;line-height:27px;color:#2b2b2b;font-weight:normal;transform:scaleX(1.1069);transform-origin:0 0;">Facturation</span>
<span class="t" style="left:685.9px;top:425.85px;font-size:27px;line-height:27px;color:#2b2b2b;font-weight:normal;transform:scaleX(1.0462);transform-origin:0 0;">Devis</span>
<span class="t" style="left:469.9px;top:486.55px;font-size:37px;line-height:37px;color:#000;font-weight:normal;transform:scaleX(1.1111);transform-origin:0 0;">0</span>
<span class="t" style="left:500.0px;top:495.75px;font-size:25px;line-height:25px;color:#000;font-weight:bold;transform:scaleX(1.2643);transform-origin:0 0;">€</span>
<span class="t" style="left:687.0px;top:486.85px;font-size:39px;line-height:39px;color:#000;font-weight:normal;transform:scaleX(0.9722);transform-origin:0 0;">Total HT</span>
<span class="t" style="left:1992.5px;top:494.55px;font-size:37px;line-height:37px;color:#000;font-weight:normal;transform:scaleX(0.8855);transform-origin:0 0;">37 813</span>
<span class="t" style="left:2100.6px;top:503.75px;font-size:25px;line-height:25px;color:#000;font-weight:bold;transform:scaleX(1.3385);transform-origin:0 0;">€</span>
<span class="t" style="left:412.6px;top:619.33px;font-size:21.5px;line-height:21.5px;color:#fff;font-weight:normal;transform:scaleX(1.0324);transform-origin:0 0;">Marque</span>
<span class="t" style="left:718.6px;top:619.33px;font-size:21.5px;line-height:21.5px;color:#fff;font-weight:normal;transform:scaleX(1.1705);transform-origin:0 0;">Intitulé</span>
<span class="t" style="left:981.2px;top:619.33px;font-size:21.5px;line-height:21.5px;color:#fff;font-weight:normal;transform:scaleX(1.0340);transform-origin:0 0;">Réf. fournisseur</span>
<span class="t" style="left:1226.6px;top:619.33px;font-size:21.5px;line-height:21.5px;color:#fff;font-weight:normal;transform:scaleX(1.0414);transform-origin:0 0;">Image</span>
<span class="t" style="left:1387.3px;top:619.33px;font-size:21.5px;line-height:21.5px;color:#fff;font-weight:normal;transform:scaleX(1.0639);transform-origin:0 0;">Fiche produit</span>
<span class="t" style="left:1575.7px;top:619.33px;font-size:21.5px;line-height:21.5px;color:#fff;font-weight:normal;transform:scaleX(1.0156);transform-origin:0 0;">Prix unitaire HT</span>
<span class="t" style="left:1803.3px;top:619.33px;font-size:21.5px;line-height:21.5px;color:#fff;font-weight:normal;transform:scaleX(1.0787);transform-origin:0 0;">Quantité</span>
<span class="t" style="left:1964.3px;top:619.33px;font-size:21.5px;line-height:21.5px;color:#fff;font-weight:normal;transform:scaleX(1.0523);transform-origin:0 0;">Total produit HT</span>
<span class="t" style="left:556.8px;top:713.00px;font-size:20px;line-height:20px;color:#555;font-weight:normal;transform:scaleX(1.0338);transform-origin:0 0;">LED 10592lm-700mA-4000K-CRI&gt;70</span>
<span class="t" style="left:1022.0px;top:713.00px;font-size:20px;line-height:20px;color:#555;font-weight:normal;transform:scaleX(1.0337);transform-origin:0 0;">413821-00</span>
<span class="t" style="left:1645.0px;top:713.00px;font-size:20px;line-height:20px;color:#555;font-weight:normal;transform:scaleX(0.9737);transform-origin:0 0;">78 €</span>
<span class="t" style="left:1849.9px;top:713.00px;font-size:20px;line-height:20px;color:#555;font-weight:normal;transform:scaleX(1.1250);transform-origin:0 0;">56</span>
<span class="t" style="left:2027.6px;top:713.00px;font-size:20px;line-height:20px;color:#555;font-weight:normal;transform:scaleX(0.9909);transform-origin:0 0;">4 368 €</span>
<span class="t" style="left:556.8px;top:814.00px;font-size:20px;line-height:20px;color:#555;font-weight:normal;transform:scaleX(1.0530);transform-origin:0 0;">LED 3600lm-4000K-CRI&gt;80</span>
<span class="t" style="left:1018.9px;top:814.00px;font-size:20px;line-height:20px;color:#555;font-weight:normal;transform:scaleX(1.0851);transform-origin:0 0;">150205-00</span>
<span class="t" style="left:1644.0px;top:814.00px;font-size:20px;line-height:20px;color:#555;font-weight:normal;transform:scaleX(1.0263);transform-origin:0 0;">34 €</span>
<span class="t" style="left:1851.0px;top:814.00px;font-size:20px;line-height:20px;color:#555;font-weight:normal;transform:scaleX(1.0714);transform-origin:0 0;">45</span>
<span class="t" style="left:2028.0px;top:814.00px;font-size:20px;line-height:20px;color:#555;font-weight:normal;transform:scaleX(0.9538);transform-origin:0 0;">1 530 €</span>
<span class="t" style="left:558.9px;top:915.00px;font-size:20px;line-height:20px;color:#555;font-weight:normal;transform:scaleX(0.9902);transform-origin:0 0;">AQUALINE,LED,5200lm840,ECG,PC,dir,surf</span>
<span class="t" style="left:995.0px;top:915.00px;font-size:20px;line-height:20px;color:#555;font-weight:normal;transform:scaleX(1.0556);transform-origin:0 0;">4052899981447</span>
<span class="t" style="left:1644.0px;top:915.00px;font-size:20px;line-height:20px;color:#555;font-weight:normal;transform:scaleX(1.0263);transform-origin:0 0;">90 €</span>
<span class="t" style="left:1849.9px;top:915.00px;font-size:20px;line-height:20px;color:#555;font-weight:normal;transform:scaleX(1.1250);transform-origin:0 0;">23</span>
<span class="t" style="left:2027.6px;top:915.00px;font-size:20px;line-height:20px;color:#555;font-weight:normal;transform:scaleX(0.9909);transform-origin:0 0;">2 068 €</span>
<span class="t" style="left:405.0px;top:907.20px;font-size:32px;line-height:32px;color:#ee1a0c;font-weight:bold;transform:scaleX(0.8419);transform-origin:0 0;-webkit-text-stroke:1px #ee1a0c">OSRAM</span>
<span class="t" style="left:556.8px;top:1016.00px;font-size:20px;line-height:20px;color:#555;font-weight:normal;transform:scaleX(1.0302);transform-origin:0 0;">Power LED 220/240 V 50/60 Hz 39 W</span>
<span class="t" style="left:1025.0px;top:1016.00px;font-size:20px;line-height:20px;color:#555;font-weight:normal;transform:scaleX(1.0341);transform-origin:0 0;">06105794</span>
<span class="t" style="left:1641.1px;top:1016.00px;font-size:20px;line-height:20px;color:#555;font-weight:normal;transform:scaleX(0.9184);transform-origin:0 0;">107 €</span>
<span class="t" style="left:1849.9px;top:1016.00px;font-size:20px;line-height:20px;color:#555;font-weight:normal;transform:scaleX(1.0714);transform-origin:0 0;">34</span>
<span class="t" style="left:2027.0px;top:1016.00px;font-size:20px;line-height:20px;color:#555;font-weight:normal;transform:scaleX(0.9846);transform-origin:0 0;">3 630 €</span>
<span class="t" style="left:391.0px;top:1010.38px;font-size:15.2px;line-height:15.2px;color:#1a1a1a;font-weight:normal;transform:scaleX(0.8325);transform-origin:0 0;-webkit-text-stroke:0.35px #1a1a1a">PERFORMANCE</span>
<span class="t" style="left:431.9px;top:1022.74px;font-size:15.6px;line-height:15.6px;color:#1a1a1a;font-weight:normal;transform:scaleX(0.8069);transform-origin:0 0;-webkit-text-stroke:0.35px #1a1a1a">LIGHTING</span>
<span class="t" style="left:495.5px;top:1014.85px;font-size:19px;line-height:19px;color:#fff;font-weight:bold;transform:scaleX(0.9062);transform-origin:0 0;">iN</span>
<span class="t" style="left:557.0px;top:1117.00px;font-size:20px;line-height:20px;color:#555;font-weight:normal;transform:scaleX(0.9570);transform-origin:0 0;">BN132C LED12S/830 PSU L1200</span>
<span class="t" style="left:1022.9px;top:1117.00px;font-size:20px;line-height:20px;color:#555;font-weight:normal;transform:scaleX(1.0920);transform-origin:0 0;">07244899</span>
<span class="t" style="left:1644.0px;top:1117.00px;font-size:20px;line-height:20px;color:#555;font-weight:normal;transform:scaleX(1.0263);transform-origin:0 0;">60 €</span>
<span class="t" style="left:1849.9px;top:1117.00px;font-size:20px;line-height:20px;color:#555;font-weight:normal;transform:scaleX(1.1250);transform-origin:0 0;">56</span>
<span class="t" style="left:2027.0px;top:1117.00px;font-size:20px;line-height:20px;color:#555;font-weight:normal;transform:scaleX(0.9846);transform-origin:0 0;">3 360 €</span>
<span class="t" style="left:390.7px;top:1111.28px;font-size:30.5px;line-height:30.5px;color:#0928b2;font-weight:bold;transform:scaleX(1.0769);transform-origin:0 0;-webkit-text-stroke:1.3px #0928b2">PHILIPS</span>
<span class="t" style="left:557.0px;top:1219.00px;font-size:20px;line-height:20px;color:#555;font-weight:normal;transform:scaleX(0.9598);transform-origin:0 0;">LL523X LED123S/840 PSD WB 7 SI</span>
<span class="t" style="left:1024.0px;top:1219.00px;font-size:20px;line-height:20px;color:#555;font-weight:normal;transform:scaleX(1.0575);transform-origin:0 0;">38470100</span>
<span class="t" style="left:1644.0px;top:1219.00px;font-size:20px;line-height:20px;color:#555;font-weight:normal;transform:scaleX(1.0263);transform-origin:0 0;">56 €</span>
<span class="t" style="left:1849.9px;top:1219.00px;font-size:20px;line-height:20px;color:#555;font-weight:normal;transform:scaleX(1.1250);transform-origin:0 0;">23</span>
<span class="t" style="left:2028.0px;top:1219.00px;font-size:20px;line-height:20px;color:#555;font-weight:normal;transform:scaleX(0.9538);transform-origin:0 0;">1 288 €</span>
<span class="t" style="left:390.7px;top:1213.28px;font-size:30.5px;line-height:30.5px;color:#0928b2;font-weight:bold;transform:scaleX(1.0769);transform-origin:0 0;-webkit-text-stroke:1.3px #0928b2">PHILIPS</span>
<span class="t" style="left:556.9px;top:1320.00px;font-size:20px;line-height:20px;color:#555;font-weight:normal;transform:scaleX(1.0106);transform-origin:0 0;">BGP213 LED49-4S/740 II DM50 D9 48/60A</span>
<span class="t" style="left:1022.9px;top:1320.00px;font-size:20px;line-height:20px;color:#555;font-weight:normal;transform:scaleX(1.0920);transform-origin:0 0;">34883300</span>
<span class="t" style="left:1639.0px;top:1320.00px;font-size:20px;line-height:20px;color:#555;font-weight:normal;transform:scaleX(1.0000);transform-origin:0 0;">345 €</span>
<span class="t" style="left:1851.0px;top:1320.00px;font-size:20px;line-height:20px;color:#555;font-weight:normal;transform:scaleX(1.0000);transform-origin:0 0;">12</span>
<span class="t" style="left:2028.0px;top:1320.00px;font-size:20px;line-height:20px;color:#555;font-weight:normal;transform:scaleX(0.9697);transform-origin:0 0;">4 140 €</span>
<span class="t" style="left:390.7px;top:1314.28px;font-size:30.5px;line-height:30.5px;color:#0928b2;font-weight:bold;transform:scaleX(1.0769);transform-origin:0 0;-webkit-text-stroke:1.3px #0928b2">PHILIPS</span>
</body></html>
